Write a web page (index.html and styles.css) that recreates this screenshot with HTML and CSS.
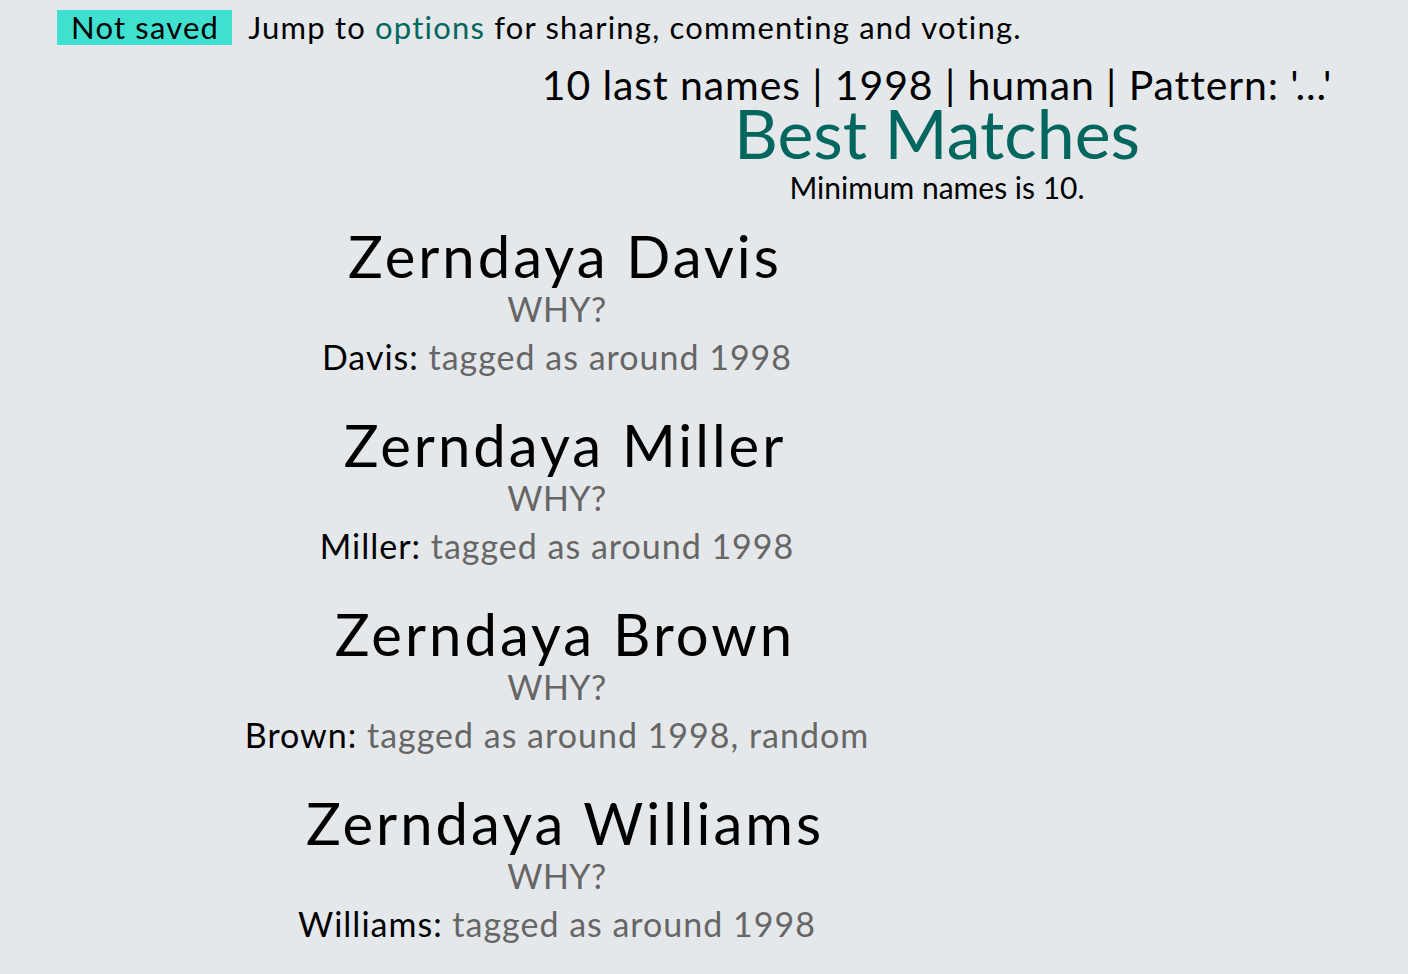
FILE: index.html
```html
<!DOCTYPE html>
<html>
<head>
<meta charset="utf-8">
<link rel="stylesheet" href="styles.css">
</head>
<body>
<div class="topbar">
  <span class="badge">Not saved</span>
  <span class="jump">Jump to <a class="link" href="#options">options</a> for sharing, commenting and voting.</span>
</div>
<div class="header">
  <div class="meta">10 last names | 1998 | human | Pattern: '...'</div>
  <h1 class="title">Best Matches</h1>
  <div class="minimum">Minimum names is 10.</div>
</div>
<div class="names">
  <div class="entry">
    <div class="name">Zerndaya Davis</div>
    <div class="why">WHY?</div>
    <div class="reason">Davis: <span class="tags">tagged as around 1998</span></div>
  </div>
  <div class="entry">
    <div class="name">Zerndaya Miller</div>
    <div class="why">WHY?</div>
    <div class="reason">Miller: <span class="tags">tagged as around 1998</span></div>
  </div>
  <div class="entry">
    <div class="name">Zerndaya Brown</div>
    <div class="why">WHY?</div>
    <div class="reason">Brown: <span class="tags">tagged as around 1998, random</span></div>
  </div>
  <div class="entry">
    <div class="name">Zerndaya Williams</div>
    <div class="why">WHY?</div>
    <div class="reason">Williams: <span class="tags">tagged as around 1998</span></div>
  </div>
</div>
</body>
</html>
```
FILE: styles.css
```css
html, body {
  margin: 0;
  padding: 0;
  background: #e5e8eb;
  color: #000;
  font-family: Lato, "Open Sans", sans-serif;
  font-weight: 400;
}
.topbar {
  display: flex;
  align-items: center;
  gap: 16px;
  padding: 10px 0 0 57px;
  font-size: 31px;
  letter-spacing: 1.2px;
  height: 35px;
}
.badge {
  background: #40e0d0;
  padding: 0 13px 0 14px;
  height: 35px;
  line-height: 35px;
  display: inline-block;
}
.jump {
  line-height: 35px;
}
.link {
  color: #00665e;
  text-decoration: none;
}
.header {
  padding-left: 466px;
  text-align: center;
}
.meta {
  font-size: 41px;
  letter-spacing: 0.9px;
  line-height: 44px;
  margin-top: 18px;
}
.title {
  margin: 0;
  font-weight: 400;
  font-size: 68px;
  line-height: 51px;
  color: #00665e;
}
.minimum {
  font-size: 30px;
  line-height: 40px;
  padding-top: 9px;
}
.names {
  width: 1130px;
  text-align: center;
  margin-top: 17px;
}
.entry {
  margin-bottom: 35px;
}
.name {
  font-size: 58px;
  line-height: 64px;
  letter-spacing: 3px;
}
.why {
  font-size: 34px;
  letter-spacing: 0.5px;
  line-height: 42px;
  color: #666;
  padding-right: 16px;
}
.reason {
  font-size: 34px;
  letter-spacing: 1px;
  line-height: 42px;
  padding-top: 6px;
  padding-right: 16px;
}
.tags {
  color: #666;
}
```
